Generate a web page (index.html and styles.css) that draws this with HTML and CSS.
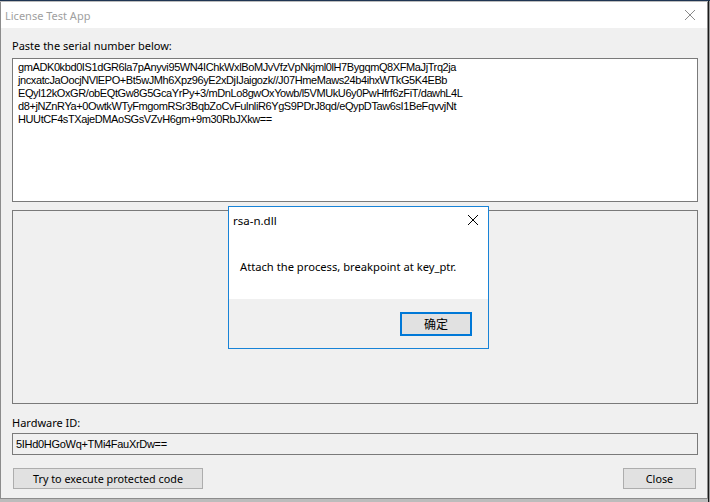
FILE: index.html
```html
<!DOCTYPE html>
<html>
<head>
<meta charset="utf-8">
<title>License Test App</title>
<link rel="stylesheet" href="styles.css">
</head>
<body>
<div class="desktop">
  <div class="window">
    <div class="titlebar">
      <span class="title">License Test App</span>
      <svg class="close" width="12" height="12" viewBox="0 0 12 12"><path d="M1 1 L11 11 M11 1 L1 11" stroke="#8a8a8a" stroke-width="1" fill="none"/></svg>
    </div>
    <div class="client">
      <div class="label first">Paste the serial number below:</div>
      <div class="serial">gmADK0kbd0IS1dGR6la7pAnyvi95WN4IChkWxlBoMJvVfzVpNkjml0lH7BygqmQ8XFMaJjTrq2ja<br>jncxatcJaOocjNVlEPO+Bt5wJMh6Xpz96yE2xDjIJaigozk//J07HmeMaws24b4ihxWTkG5K4EBb<br>EQyl12kOxGR/obEQtGw8G5GcaYrPy+3/mDnLo8gwOxYowb/l5VMUkU6y0PwHfrf6zFiT/dawhL4L<br>d8+jNZnRYa+0OwtkWTyFmgomRSr3BqbZoCvFulnliR6YgS9PDrJ8qd/eQypDTaw6sI1BeFqvvjNt<br>HUUtCF4sTXajeDMAoSGsVZvH6gm+9m30RbJXkw==</div>
      <div class="panel"></div>
      <div class="label hw">Hardware ID:</div>
      <div class="hwfield">5IHd0HGoWq+TMi4FauXrDw==</div>
      <div class="buttons">
        <button class="btn try">Try to execute protected code</button>
        <button class="btn closebtn">Close</button>
      </div>
    </div>
  </div>

  <div class="msgbox">
    <div class="msg-title">
      <span>rsa-n.dll</span>
      <svg class="msg-x" width="12" height="12" viewBox="0 0 12 12"><path d="M1 1 L11 11 M11 1 L1 11" stroke="#000" stroke-width="1" fill="none"/></svg>
    </div>
    <div class="msg-body">Attach the process, breakpoint at key_ptr.</div>
    <div class="msg-foot">
      <button class="btn ok">确定</button>
    </div>
  </div>
</div>
</body>
</html>
```
FILE: styles.css
```css
html, body {
  margin: 0;
  padding: 0;
}
body {
  width: 710px;
  height: 502px;
  overflow: hidden;
  background: #bcbcbc;
  font-family: "Liberation Sans", "Noto Sans", sans-serif;
}
.desktop {
  position: relative;
  width: 710px;
  height: 502px;
  padding-top: 1px;
  box-sizing: border-box;
  background: linear-gradient(to right, #bcbcbc 708px, #1a1a1a 708px, #1a1a1a 709px, #9a9a9a 709px);
  border-top: 1px solid #1f3552;
}
.window {
  width: 708px;
  height: 497px;
  box-sizing: border-box;
  background: #f0f0f0;
  border-left: 1px solid #8c8c8c;
  border-right: 1px solid #8c8c8c;
  border-bottom: 1px solid #8c8c8c;
  display: flex;
  flex-direction: column;
}
.titlebar {
  height: 26px;
  background: #ffffff;
  display: flex;
  align-items: center;
  justify-content: space-between;
  padding: 0 11px 0 4px;
  flex: none;
}
.title {
  font-family: "Noto Sans", "Liberation Sans", sans-serif;
  font-size: 11px;
  color: #a0a0a0;
}
.client {
  flex: 1;
  display: flex;
  flex-direction: column;
  padding: 11px 9px 0 11px;
}
.label {
  font-family: "Noto Sans", "Liberation Sans", sans-serif;
  font-size: 11px;
  line-height: 13px;
  height: 13px;
  color: #000;
}
.label.first {
  margin-bottom: 6px;
}
.serial {
  height: 144px;
  box-sizing: border-box;
  background: #fff;
  border: 1px solid #7a7a7a;
  padding: 2px 5px;
  font-family: "Liberation Sans", sans-serif;
  font-size: 11px;
  letter-spacing: -0.4px;
  line-height: 13px;
  color: #000;
  white-space: nowrap;
  overflow: hidden;
}
.panel {
  height: 194px;
  margin-top: 8px;
  box-sizing: border-box;
  border: 1px solid #7a7a7a;
  background: #f0f0f0;
}
.label.hw {
  margin-top: 12px;
  margin-bottom: 4px;
}
.hwfield {
  height: 22px;
  box-sizing: border-box;
  border: 1px solid #7a7a7a;
  background: #f0f0f0;
  padding: 0 3px;
  font-family: "Liberation Sans", sans-serif;
  font-size: 11px;
  letter-spacing: -0.3px;
  line-height: 20px;
  color: #000;
}
.buttons {
  margin-top: 13px;
  display: flex;
  justify-content: space-between;
  padding: 0 2px 0 1px;
}
.btn {
  height: 21px;
  box-sizing: border-box;
  background: #e1e1e1;
  border: 1px solid #adadad;
  font-family: "Noto Sans", "Liberation Sans", sans-serif;
  font-size: 10.8px;
  color: #000;
  padding: 0;
  line-height: 18px;
}
.try {
  width: 190px;
}
.closebtn {
  width: 73px;
}
.msgbox {
  position: absolute;
  left: 228px;
  top: 205px;
  width: 261px;
  height: 143px;
  box-sizing: border-box;
  border: 1px solid #1883d7;
  background: #fff;
  display: flex;
  flex-direction: column;
}
.msg-title {
  height: 26px;
  display: flex;
  align-items: center;
  justify-content: space-between;
  padding: 0 9px 0 4px;
  font-family: "Noto Sans", "Liberation Sans", sans-serif;
  font-size: 11.5px;
  color: #000;
  flex: none;
}
.msg-body {
  flex: 1;
  padding: 26px 0 0 11px;
  font-family: "Noto Sans", "Liberation Sans", sans-serif;
  font-size: 11.2px;
  color: #000;
}
.msg-foot {
  height: 49px;
  background: #f0f0f0;
  display: flex;
  justify-content: flex-end;
  align-items: flex-start;
  padding: 13px 16px 0 0;
  box-sizing: border-box;
  flex: none;
}
.ok {
  width: 72px;
  height: 24px;
  border: 2px solid #0078d7;
  font-family: "Noto Sans CJK SC", sans-serif;
  font-size: 12px;
  line-height: 18px;
}
```
